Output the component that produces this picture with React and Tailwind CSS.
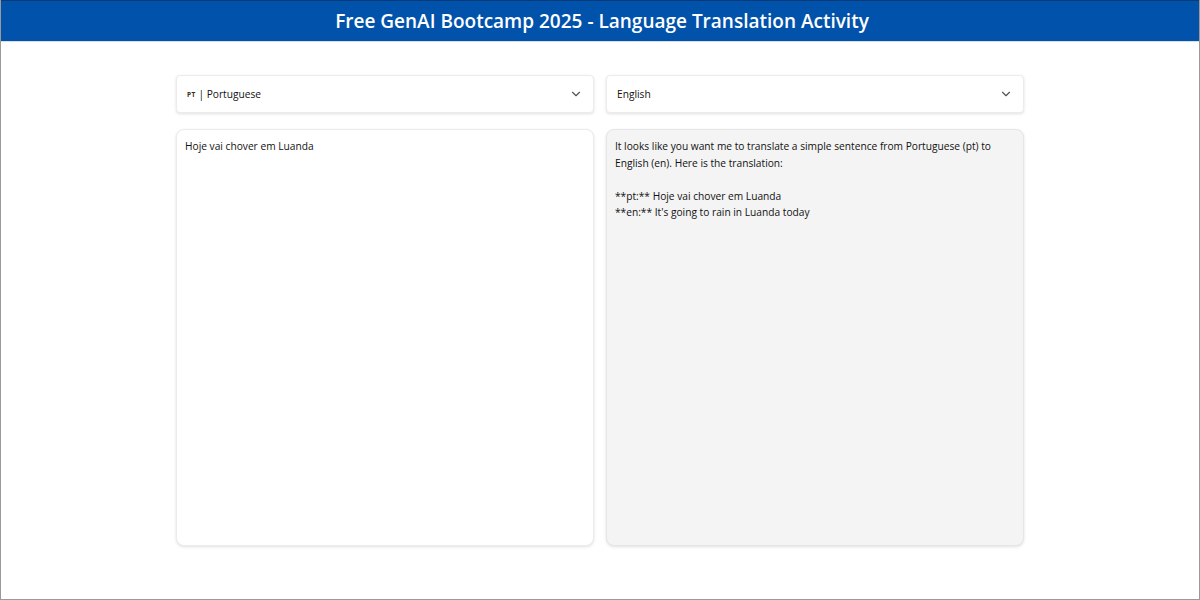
import { ChevronDown } from 'lucide-react'

const FONT = { fontFamily: '"Open Sans", "Noto Sans", sans-serif' }

function Select({ children }) {
  return (
    <div className="flex items-center justify-between h-[38px] px-[10px] bg-white rounded-[4px] border border-[#ececec] shadow-[0_1px_3px_rgba(0,0,0,0.12)]">
      <div className="flex items-center text-[10.2px] text-[#111] pt-[1px]">{children}</div>
      <ChevronDown size={14} strokeWidth={2} className="text-[#555]" />
    </div>
  )
}

export default function App() {
  return (
    <div className="h-[600px] w-[1200px] flex flex-col bg-white border-x border-b border-[#9a9a9a] overflow-hidden" style={FONT}>
      {/* Header */}
      <div className="h-[42px] shrink-0 bg-[#0152ab] border-t border-[#0a3a75] border-b border-b-[#d8dde6] flex items-center justify-center">
        <h1 className="text-white text-[19px] font-semibold pl-[4px]">
          Free GenAI Bootcamp 2025 - Language Translation Activity
        </h1>
      </div>

      <div className="w-[848px] mx-auto mt-[33px] flex flex-col gap-[16px]">
        <div className="grid grid-cols-2 gap-[12px]">
          <Select>
            <span className="text-[6.5px] font-bold mr-[3px] tracking-[0.3px] text-[#3a2a10]">PT</span>
            <span>| Portuguese</span>
          </Select>
          <Select>
            <span>English</span>
          </Select>
        </div>

        <div className="grid grid-cols-2 gap-[12px]">
          <div className="h-[417px] bg-white rounded-[8px] border border-[#ececec] shadow-[0_1px_3px_rgba(0,0,0,0.12)] px-[8px] pt-[8px] text-[10.2px] leading-[16.5px] text-[#111]">
            Hoje vai chover em Luanda
          </div>
          <div className="h-[417px] bg-[#f4f4f4] rounded-[8px] border border-[#e6e6e6] shadow-[0_1px_3px_rgba(0,0,0,0.12)] px-[8px] pt-[8px] text-[10.2px] leading-[16.5px] text-[#111] whitespace-pre-line">
            {`It looks like you want me to translate a simple sentence from Portuguese (pt) to
English (en). Here is the translation:

**pt:** Hoje vai chover em Luanda
**en:** It's going to rain in Luanda today`}
          </div>
        </div>
      </div>
    </div>
  )
}
